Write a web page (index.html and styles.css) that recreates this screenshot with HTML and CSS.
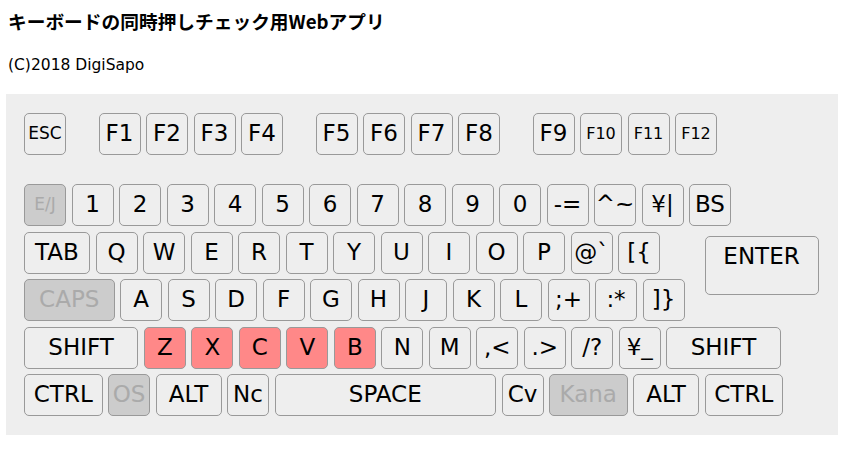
FILE: index.html
```html
<!DOCTYPE html>
<html lang="ja">
<head>
<meta charset="utf-8">
<title>キーボードの同時押しチェック用Webアプリ</title>
<link rel="stylesheet" href="styles.css">
</head>
<body>
<h3 class="title">キーボードの同時押しチェック用Webアプリ</h3>
<p class="copy">(C)2018 DigiSapo</p>
<div class="keyboard">
  <div class="row row-fn">
    <div class="key sm esc">ESC</div>
    <div class="group">
      <div class="key">F1</div><div class="key">F2</div><div class="key">F3</div><div class="key">F4</div>
    </div>
    <div class="group">
      <div class="key">F5</div><div class="key">F6</div><div class="key">F7</div><div class="key">F8</div>
    </div>
    <div class="group">
      <div class="key">F9</div><div class="key sm">F10</div><div class="key sm">F11</div><div class="key sm">F12</div>
    </div>
  </div>
  <div class="row">
    <div class="key sm esc off">E/J</div>
    <div class="key">1</div><div class="key">2</div><div class="key">3</div><div class="key">4</div><div class="key">5</div>
    <div class="key">6</div><div class="key">7</div><div class="key">8</div><div class="key">9</div><div class="key">0</div>
    <div class="key">-=</div><div class="key">^~</div><div class="key">¥|</div><div class="key">BS</div>
  </div>
  <div class="row">
    <div class="key w15">TAB</div>
    <div class="key">Q</div><div class="key">W</div><div class="key">E</div><div class="key">R</div><div class="key">T</div>
    <div class="key">Y</div><div class="key">U</div><div class="key">I</div><div class="key">O</div><div class="key">P</div>
    <div class="key">@`</div><div class="key">[{</div>
    <div class="key enter">ENTER</div>
  </div>
  <div class="row">
    <div class="key w2 off">CAPS</div>
    <div class="key">A</div><div class="key">S</div><div class="key">D</div><div class="key">F</div><div class="key">G</div>
    <div class="key">H</div><div class="key">J</div><div class="key">K</div><div class="key">L</div>
    <div class="key">;+</div><div class="key">:*</div><div class="key">]}</div>
  </div>
  <div class="row">
    <div class="key w25">SHIFT</div>
    <div class="key on">Z</div><div class="key on">X</div><div class="key on">C</div><div class="key on">V</div><div class="key on">B</div>
    <div class="key">N</div><div class="key">M</div><div class="key">,&lt;</div><div class="key">.&gt;</div><div class="key">/?</div><div class="key">¥_</div>
    <div class="key w25">SHIFT</div>
  </div>
  <div class="row">
    <div class="key w175">CTRL</div>
    <div class="key off">OS</div>
    <div class="key w15">ALT</div>
    <div class="key">Nc</div>
    <div class="key space">SPACE</div>
    <div class="key">Cv</div>
    <div class="key w175 off">Kana</div>
    <div class="key w15">ALT</div>
    <div class="key w175">CTRL</div>
  </div>
</div>
</body>
</html>
```

FILE: styles.css
```css
html, body {
  background: #ffffff;
}
body {
  margin: 8px 6px;
  color: #000;
  font-family: "DejaVu Sans", "Noto Sans CJK JP", sans-serif;
}
.title {
  margin: 0 0 0 2px;
  font-family: "Noto Sans CJK JP", sans-serif;
  font-size: 18.72px;
  font-weight: bold;
  line-height: 26px;
}
.copy {
  margin: 19px 0 0 2px;
  font-size: 15.5px;
  line-height: 24px;
}
.keyboard {
  margin-top: 17px;
  width: 832px;
  box-sizing: border-box;
  background: #eeeeee;
  padding: 19px 18px 19px 18px;
  display: flex;
  flex-direction: column;
  gap: 5.5px;
}
.row {
  display: flex;
  gap: 5.5px;
  height: 42px;
  align-items: flex-start;
}
.row-fn {
  margin-bottom: 23.5px;
}
.group {
  display: flex;
  gap: 5.5px;
  margin-left: 27px;
}
.key {
  box-sizing: border-box;
  width: 42px;
  height: 42px;
  flex: none;
  border: 1px solid #999999;
  border-radius: 5px;
  background: #eeeeee;
  text-align: center;
  font-size: 23px;
  line-height: 38px;
  white-space: nowrap;
}
.key.sm {
  font-size: 16px;
  line-height: 39px;
}
.key.esc {
  font-size: 17px;
}
.key.off {
  background: #cccccc;
  color: #aaaaaa;
}
.key.on {
  background: #ff8888;
}
.w15 { width: 66px; }
.w175 { width: 78.5px; }
.w2 { width: 90.5px; }
.w25 { width: 114.3px; }
.space { width: 221.5px; }
.enter {
  width: 114px;
  height: 59.5px;
  margin-left: 39px;
  margin-top: 4px;
}
```
